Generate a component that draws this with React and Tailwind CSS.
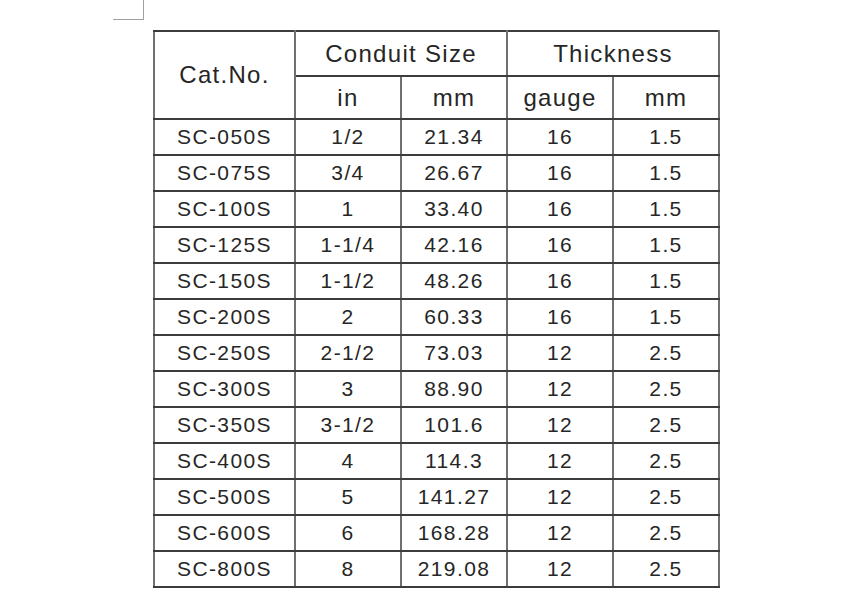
import React from 'react';

const ROWS = [
    ['SC-050S', '1/2', '21.34', '16', '1.5'],
    ['SC-075S', '3/4', '26.67', '16', '1.5'],
    ['SC-100S', '1', '33.40', '16', '1.5'],
    ['SC-125S', '1-1/4', '42.16', '16', '1.5'],
    ['SC-150S', '1-1/2', '48.26', '16', '1.5'],
    ['SC-200S', '2', '60.33', '16', '1.5'],
    ['SC-250S', '2-1/2', '73.03', '12', '2.5'],
    ['SC-300S', '3', '88.90', '12', '2.5'],
    ['SC-350S', '3-1/2', '101.6', '12', '2.5'],
    ['SC-400S', '4', '114.3', '12', '2.5'],
    ['SC-500S', '5', '141.27', '12', '2.5'],
    ['SC-600S', '6', '168.28', '12', '2.5'],
    ['SC-800S', '8', '219.08', '12', '2.5'],
];

const cell = 'border-x-2 border-x-[#707070] border-y-2 border-y-[#3c3c3c] text-center align-middle p-0';
const head = `${cell} text-[24px] tracking-[1.3px] font-normal leading-[28px]`;
const body = `${cell} text-[21px] tracking-[1.4px] leading-[24px]`;

const App = () => {
    return (
        <div className="bg-white w-[843px] h-[605px] overflow-hidden text-[#262626]" style={{ fontFamily: '"Liberation Sans", Arial, sans-serif' }}>
            {/* corner mark */}
            <div className="ml-[113px] w-[31px] h-[20px] border-r border-b border-[#a0a0a0]"></div>

            {/* Spec table */}
            <div className="pl-[153px] pt-[10px]">
                <table className="table-fixed border-collapse w-[565px]">
                    <colgroup>
                        <col className="w-[141px]" />
                        <col className="w-[106px]" />
                        <col className="w-[106px]" />
                        <col className="w-[106px]" />
                        <col className="w-[106px]" />
                    </colgroup>
                    <thead>
                        <tr className="h-[45px]">
                            <th rowSpan={2} className={head}>Cat.No.</th>
                            <th colSpan={2} className={head}>Conduit Size</th>
                            <th colSpan={2} className={head}>Thickness</th>
                        </tr>
                        <tr className="h-[43px]">
                            <th className={head}>in</th>
                            <th className={head}>mm</th>
                            <th className={head}>gauge</th>
                            <th className={head}>mm</th>
                        </tr>
                    </thead>
                    <tbody>
                        {ROWS.map(row => (
                            <tr key={row[0]} className="h-[36px]">
                                {row.map((v, i) => (
                                    <td key={i} className={body}>{v}</td>
                                ))}
                            </tr>
                        ))}
                    </tbody>
                </table>
            </div>
        </div>
    );
};

export default App;
